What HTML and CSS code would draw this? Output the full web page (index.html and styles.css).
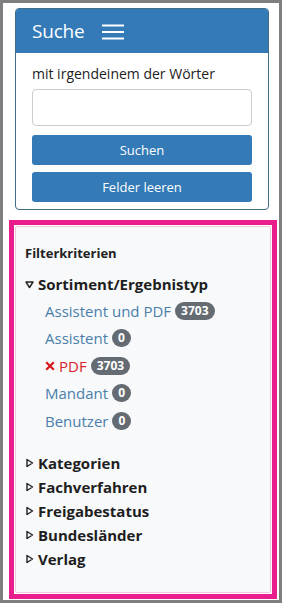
FILE: index.html
```html
<!DOCTYPE html>
<html lang="de">
<head>
<meta charset="utf-8">
<link rel="stylesheet" href="styles.css">
</head>
<body>
<div class="frame">
  <div class="card">
    <div class="card-head">
      <span class="title">Suche</span>
      <svg class="burger" width="22" height="16" viewBox="0 0 22 16"><path d="M0 1.5h22M0 8h22M0 14.5h22" stroke="#fff" stroke-width="2"/></svg>
    </div>
    <div class="card-body">
      <label class="lbl">mit irgendeinem der Wörter</label>
      <div class="input"></div>
      <button class="btn">Suchen</button>
      <button class="btn">Felder leeren</button>
    </div>
  </div>
  <div class="filter-wrap">
    <div class="filter">
      <div class="f-title">Filterkriterien</div>
      <div class="group open">
        <div class="g-head"><svg class="tri" width="9" height="9" viewBox="0 0 9 9"><path d="M1 2h7L4.5 7.5z" fill="none" stroke="#222" stroke-width="1.4" stroke-linejoin="round"/></svg>Sortiment/Ergebnistyp</div>
        <ul class="items">
          <li><span class="link">Assistent und PDF</span><span class="badge">3703</span></li>
          <li><span class="link">Assistent</span><span class="badge">0</span></li>
          <li><span class="link active"><svg class="x" width="10" height="10" viewBox="0 0 10 10"><path d="M1.2 1.2l7.6 7.6M8.8 1.2L1.2 8.8" stroke="#d9141c" stroke-width="2.2"/></svg>PDF</span><span class="badge">3703</span></li>
          <li><span class="link">Mandant</span><span class="badge">0</span></li>
          <li><span class="link">Benutzer</span><span class="badge">0</span></li>
        </ul>
      </div>
      <div class="closed-list">
        <div class="g-head"><svg class="tri" width="9" height="10" viewBox="0 0 9 10"><path d="M2 1.5v7l5.5-3.5z" fill="none" stroke="#222" stroke-width="1.4" stroke-linejoin="round"/></svg>Kategorien</div>
        <div class="g-head"><svg class="tri" width="9" height="10" viewBox="0 0 9 10"><path d="M2 1.5v7l5.5-3.5z" fill="none" stroke="#222" stroke-width="1.4" stroke-linejoin="round"/></svg>Fachverfahren</div>
        <div class="g-head"><svg class="tri" width="9" height="10" viewBox="0 0 9 10"><path d="M2 1.5v7l5.5-3.5z" fill="none" stroke="#222" stroke-width="1.4" stroke-linejoin="round"/></svg>Freigabestatus</div>
        <div class="g-head"><svg class="tri" width="9" height="10" viewBox="0 0 9 10"><path d="M2 1.5v7l5.5-3.5z" fill="none" stroke="#222" stroke-width="1.4" stroke-linejoin="round"/></svg>Bundesländer</div>
        <div class="g-head"><svg class="tri" width="9" height="10" viewBox="0 0 9 10"><path d="M2 1.5v7l5.5-3.5z" fill="none" stroke="#222" stroke-width="1.4" stroke-linejoin="round"/></svg>Verlag</div>
      </div>
    </div>
  </div>
</div>
</body>
</html>
```
FILE: styles.css
```css
* { box-sizing: border-box; }
html, body { margin: 0; padding: 0; }
body {
  font-family: "Open Sans", "Noto Sans", sans-serif;
  color: #222;
  background: #7f7f7f;
}
.frame {
  width: 282px;
  height: 603px;
  border: 3px solid #7f7f7f;
  background: #fff;
  padding: 5px 2px 0 6px;
  display: flex;
  flex-direction: column;
}
.card {
  margin: 0 8px 0 6px;
  border: 1px solid #3e6f86;
  border-radius: 4px;
  overflow: hidden;
}
.card-head {
  background: #337ab7;
  height: 44px;
  display: flex;
  align-items: center;
  padding-left: 16px;
  gap: 17px;
}
.title {
  color: #fff;
  font-size: 19px;
  letter-spacing: -0.2px;
}
.burger { margin-top: 2px; }
.card-body {
  padding: 11px 16px 7px 16px;
  display: flex;
  flex-direction: column;
}
.lbl {
  font-size: 14px;
  line-height: 20px;
  margin-bottom: 5px;
}
.input {
  height: 37px;
  border: 1px solid #ccc;
  border-radius: 4px;
  margin-bottom: 9px;
}
.btn {
  height: 30px;
  border: 0;
  border-radius: 3px;
  background: #337ab7;
  color: #fff;
  font-family: inherit;
  font-size: 13px;
  margin-bottom: 7px;
  padding: 0;
}
.btn:last-child { margin-bottom: 0; }
.filter-wrap {
  margin-top: 10px;
  border: 5px solid #e91e8c;
  flex: 1;
  padding: 1px;
  margin-bottom: 1px;
  background: #fff;
}
.filter {
  height: 100%;
  background: #f8f9fa;
  border: 1px solid #f0c8e0;
  border-radius: 2px;
  padding: 17px 9px 0 9px;
}
.f-title {
  font-weight: 700;
  font-size: 13px;
  margin-bottom: 10px;
}
.g-head {
  display: flex;
  align-items: center;
  font-weight: 700;
  font-size: 15px;
  line-height: 24px;
  color: #1e1e1e;
}
.tri { margin-right: 4px; flex: none; }
.items {
  list-style: none;
  margin: 1px 0 16px 0;
  padding: 0 0 0 20px;
}
.items li {
  display: flex;
  align-items: center;
  height: 27.5px;
}
.link {
  color: #4a7eab;
  font-size: 15px;
  display: flex;
  align-items: center;
}
.link.active { color: #d9232a; }
.x {
  margin-right: 4px;
  flex: none;
}
.badge {
  margin-left: 4px;
  background: #646b72;
  color: #fff;
  font-weight: 700;
  font-size: 12px;
  line-height: 18px;
  padding: 0 6px;
  border-radius: 9px;
  min-width: 19px;
  text-align: center;
}
```
